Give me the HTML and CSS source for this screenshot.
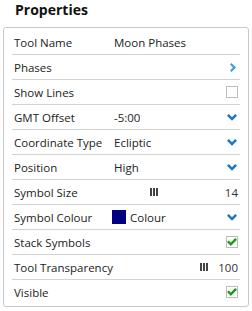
FILE: index.html
```html
<!DOCTYPE html>
<html lang="en">
<head>
  <meta charset="UTF-8" />
  <title>Properties</title>
  <link rel="stylesheet" href="styles.css">
</head>
<body>
  <h1>Properties</h1>
  <div class="panel">
    <div class="row">
      <span class="label">Tool Name</span>
      <span class="value">Moon Phases</span>
    </div>
    <div class="row">
      <span class="label">Phases</span>
      <span class="value"></span>
      <svg class="arrow" width="6" height="9" viewBox="0 0 6 9"><path d="M0 1.5 L1.5 0 L6 4.5 L1.5 9 L0 7.5 L3 4.5 Z" fill="#3a9de6"/></svg>
    </div>
    <div class="row">
      <span class="label">Show Lines</span>
      <span class="value"></span>
      <span class="check"></span>
    </div>
    <div class="row">
      <span class="label">GMT Offset</span>
      <span class="value">-5:00</span>
      <svg class="chev" width="10" height="7" viewBox="0 0 10 7"><path d="M0 1.8 L1.8 0 L5 3.2 L8.2 0 L10 1.8 L5 6.8 Z" fill="#1b78c4"/></svg>
    </div>
    <div class="row">
      <span class="label">Coordinate Type</span>
      <span class="value">Ecliptic</span>
      <svg class="chev" width="10" height="7" viewBox="0 0 10 7"><path d="M0 1.8 L1.8 0 L5 3.2 L8.2 0 L10 1.8 L5 6.8 Z" fill="#1b78c4"/></svg>
    </div>
    <div class="row">
      <span class="label">Position</span>
      <span class="value">High</span>
      <svg class="chev" width="10" height="7" viewBox="0 0 10 7"><path d="M0 1.8 L1.8 0 L5 3.2 L8.2 0 L10 1.8 L5 6.8 Z" fill="#1b78c4"/></svg>
    </div>
    <div class="row">
      <span class="label">Symbol Size</span>
      <span class="value slider">
        <svg class="grip" width="8" height="8" viewBox="0 0 8 8"><rect x="0" y="0" width="2" height="8" fill="#444"/><rect x="3" y="0" width="2" height="8" fill="#444"/><rect x="6" y="0" width="2" height="8" fill="#444"/></svg>
      </span>
      <span class="num">14</span>
    </div>
    <div class="row">
      <span class="label">Symbol Colour</span>
      <span class="value"><span class="swatch"></span>Colour</span>
      <svg class="chev" width="10" height="7" viewBox="0 0 10 7"><path d="M0 1.8 L1.8 0 L5 3.2 L8.2 0 L10 1.8 L5 6.8 Z" fill="#1b78c4"/></svg>
    </div>
    <div class="row">
      <span class="label">Stack Symbols</span>
      <span class="value"></span>
      <span class="check"><svg width="10" height="8" viewBox="0 0 10 8"><path d="M0 4 L1.8 2.4 L3.8 4.4 L8.2 0 L10 1.8 L3.8 8 Z" fill="#1f9a1f"/></svg></span>
    </div>
    <div class="row">
      <span class="label wide">Tool Transparency</span>
      <svg class="grip" width="8" height="8" viewBox="0 0 8 8"><rect x="0" y="0" width="2" height="8" fill="#444"/><rect x="3" y="0" width="2" height="8" fill="#444"/><rect x="6" y="0" width="2" height="8" fill="#444"/></svg>
      <span class="num">100</span>
    </div>
    <div class="row">
      <span class="label">Visible</span>
      <span class="value"></span>
      <span class="check"><svg width="10" height="8" viewBox="0 0 10 8"><path d="M0 4 L1.8 2.4 L3.8 4.4 L8.2 0 L10 1.8 L3.8 8 Z" fill="#1f9a1f"/></svg></span>
    </div>
  </div>
</body>
</html>
```

FILE: styles.css
```css
body {
  margin: 0;
  background: #fff;
  color: #222;
  font-family: 'Open Sans', sans-serif;
  font-size: 11.5px;
}
h1 {
  margin: 0 0 8px;
  padding: 1px 0 0 15px;
  font-size: 14px;
  line-height: 18px;
  font-weight: bold;
  color: #111;
}
.panel {
  margin: 0 3px;
  border: 1px solid #c9c9c9;
  border-radius: 3px;
  padding: 2px 8px 2px;
}
.row {
  display: flex;
  align-items: center;
  height: 24px;
  padding: 0 2px;
  border-bottom: 1px solid #d2d2d2;
}
.row:last-child {
  border-bottom: none;
}
.label {
  width: 100px;
  flex-shrink: 0;
  white-space: nowrap;
}
.label.wide {
  flex: 1;
}
.value {
  flex: 1;
  display: flex;
  align-items: center;
  white-space: nowrap;
}
.slider {
  padding-left: 36px;
}
.grip {
  display: block;
}
.num {
  margin-left: auto;
  color: #333;
}
.grip + .num {
  margin-left: 10px;
}
.swatch {
  width: 14px;
  height: 14px;
  background: #000080;
  margin: 0 4px 0 -2px;
}
.chev {
  margin-right: 1px;
}
.arrow {
  margin-right: 2px;
}
.check {
  width: 10px;
  height: 10px;
  border: 1px solid #bdbdbd;
  display: flex;
  align-items: center;
  justify-content: center;
}
```
